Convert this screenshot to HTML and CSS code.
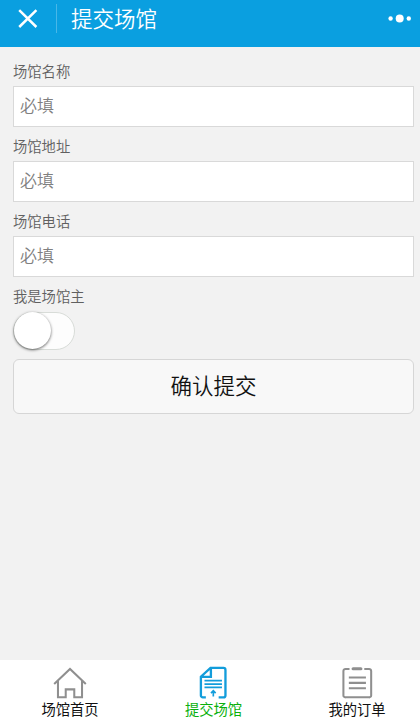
FILE: index.html
```html
<!DOCTYPE html>
<html lang="zh-CN">
<head>
<meta charset="utf-8">
<title>提交场馆</title>
<link rel="stylesheet" href="styles.css">
</head>
<body>
<header class="topbar">
  <svg class="close" width="20" height="20" viewBox="0 0 20 20"><path d="M1.2 1.2 18.4 18M18.4 1.2 1.2 18"/></svg>
  <span class="divider"></span>
  <h1 class="title">提交场馆</h1>
  <svg class="more" width="24" height="10" viewBox="0 0 24 10"><circle cx="2.6" cy="4.5" r="2.2"/><circle cx="11.7" cy="4.5" r="4"/><circle cx="20.8" cy="4.5" r="2.2"/></svg>
</header>
<form class="form">
  <label class="field"><span class="label">场馆名称</span><input class="input" type="text" placeholder="必填"></label>
  <label class="field"><span class="label">场馆地址</span><input class="input" type="text" placeholder="必填"></label>
  <label class="field"><span class="label">场馆电话</span><input class="input" type="text" placeholder="必填"></label>
  <div class="owner"><span class="label">我是场馆主</span><div class="switch"><div class="knob"></div></div></div>
  <button class="submit" type="button">确认提交</button>
</form>
<nav class="tabs">
  <a class="tab">
    <svg class="icon" width="36" height="34" viewBox="0 0 36 34"><path d="M1.7 18.5 18 3 34.3 18.5M5.6 15.5v16.8h8V24.1h8.8v8.2h8V15.5"/></svg>
    <span>场馆首页</span>
  </a>
  <a class="tab active">
    <svg class="icon" width="36" height="34" viewBox="0 0 36 34"><path d="M9.6 32.3H6.5a2 2 0 0 1-2-2V11L14.4 2H27.8a2 2 0 0 1 2 2V30.3a2 2 0 0 1-2 2h-5M5 11.2h9.8V2.4"/><path class="lines" d="M8.2 15.1h18M8.2 18.6h18M8.2 22h18"/><path class="arrow" d="M17.3 31.4v-6M14.9 28l2.4-2.6 2.4 2.6"/></svg>
    <span>提交场馆</span>
  </a>
  <a class="tab">
    <svg class="icon" width="36" height="34" viewBox="0 0 36 34"><path d="M10.3 3H6.2A2.2 2.2 0 0 0 4 5.2V30.3a2 2 0 0 0 2.2 2H30.4a2 2 0 0 0 2.2-2V5.2A2.2 2.2 0 0 0 30.4 3H25.5M9.6 11.8h17.6M9.6 17.4h17.6M9.6 22.9h17.6"/><path class="clip" d="M14 2.8h8"/></svg>
    <span>我的订单</span>
  </a>
</nav>
</body>
</html>
```
FILE: styles.css
```css
* { box-sizing: border-box; }
body {
  margin: 0;
  height: 719px;
  display: flex;
  flex-direction: column;
  background: #f2f2f2;
  font-family: "Noto Sans CJK SC", sans-serif;
  font-weight: 350;
  overflow: hidden;
}
.topbar {
  height: 47px;
  padding: 0 8px 10px 18px;
  display: flex;
  align-items: center;
  background: #0a9fe0;
  color: #fff;
}
.close { fill: none; stroke: #fff; stroke-width: 2.5; }
.divider { width: 1px; height: 29px; margin: 0 14px 0 18px; background: #48b7e8; }
.title { margin: 0; padding-bottom: 2px; font-size: 21.5px; line-height: 32px; font-weight: 350; }
.more { margin-left: auto; fill: #fff; }
.form { flex: 1; padding: 13px 6px 0 13px; }
.field { display: block; height: 75px; }
.label { display: block; height: 26px; font-size: 14.3px; line-height: 22px; color: #606060; }
.input {
  display: block;
  width: 100%;
  height: 41px;
  padding: 0 6px 4px;
  border: 1px solid #d9d9d9;
  border-radius: 0;
  background: #fff;
  font: inherit;
  font-size: 17px;
}
.input::placeholder { color: #808080; opacity: 1; }
.switch { width: 62px; height: 38px; margin-top: 1px; border: 1px solid #d8dcd8; border-radius: 19px; background: #fdfdfd; }
.knob { width: 37px; height: 37px; margin-top: -1px; border-radius: 50%; background: #fff; box-shadow: 0 1px 3px rgba(0,0,0,.6); }
.owner { display: flow-root; }
.submit {
  display: block;
  width: 100%;
  height: 55px;
  margin-top: 9px;
  padding: 0 0 5px;
  border: 1px solid #d6d6d6;
  border-radius: 6px;
  background: #f8f8f8;
  color: #111;
  font: inherit;
  font-size: 21.5px;
}
.tabs { height: 59px; display: flex; justify-content: space-between; padding: 6px 27px 0 34px; background: #fff; }
.tab { width: 72px; display: flex; flex-direction: column; align-items: center; font-size: 14.3px; line-height: 20px; font-weight: 400; color: #111; white-space: nowrap; }
.icon { fill: none; stroke: #8f8f8f; stroke-width: 2.1; }
.active { color: #09b00c; }
.active .icon { stroke: #139ddb; stroke-width: 2.4; }
.icon .lines { stroke-width: 1.9; }
.icon .arrow { stroke-width: 1.7; }
.icon .clip { stroke-width: 3.2; stroke-linecap: round; }
```
